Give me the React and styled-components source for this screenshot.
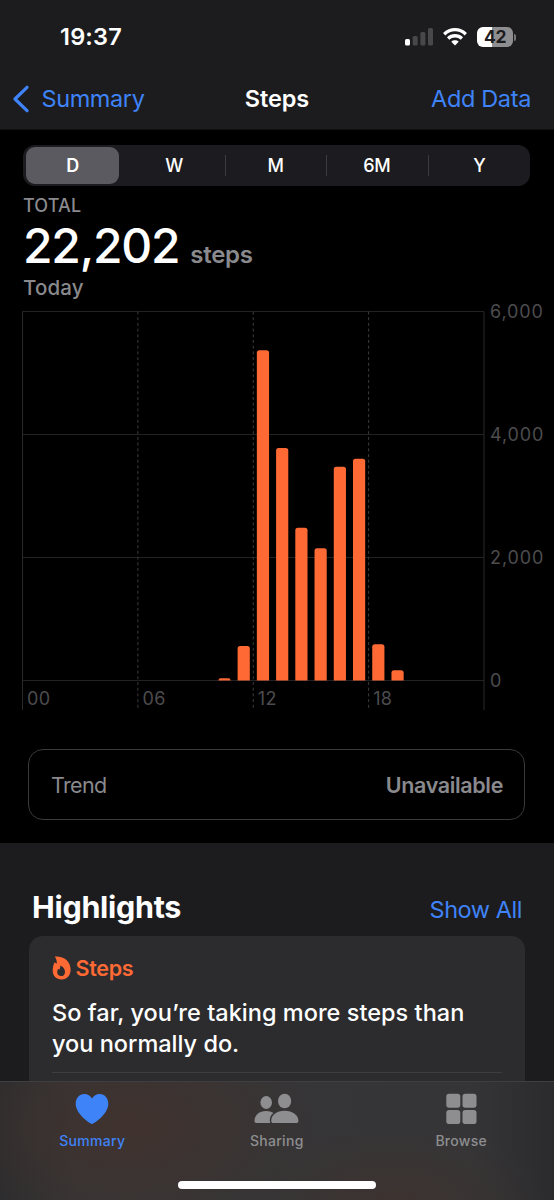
import React from 'react'
import styled, { createGlobalStyle } from 'styled-components'

const GlobalStyle = createGlobalStyle`
  * {
    box-sizing: border-box;
  }
  body {
    margin: 0;
    background: #000;
    font-family: Inter, "Liberation Sans", sans-serif;
    -webkit-font-smoothing: antialiased;
  }
`

const Screen = styled.div`
  display: flex;
  flex-direction: column;
  width: 554px;
  height: 1200px;
  overflow: hidden;
  background: #000;
  color: #fff;
`

const Text = styled.span`
  font-size: ${p => p.size}px;
  font-weight: ${p => p.weight || 400};
  letter-spacing: ${p => p.spacing || 0}px;
  line-height: ${p => p.line || 30}px;
  color: ${p => p.color || '#fff'};
  white-space: nowrap;
`

const Header = styled.header`
  height: 130px;
  flex: none;
  background: #1c1c1e;
  border-bottom: 1px solid #111113;
`

const StatusBar = styled.div`
  display: flex;
  justify-content: space-between;
  height: 74px;
  padding: 22px 38px 0 60px;
`

const StatusIcons = styled.div`
  display: flex;
  gap: 10px;
  padding-top: 5px;
`

const Battery = styled.div`
  display: flex;
  align-items: center;
  height: 20px;
`

const BatteryBody = styled.div`
  display: flex;
  justify-content: center;
  width: 36px;
  height: 20px;
  border-radius: 6px;
  background: linear-gradient(to right, #fff 43%, #8e8e90 43%);
`

const BatteryCap = styled.div`
  width: 2px;
  height: 7px;
  margin-left: 1px;
  border-radius: 0 2px 2px 0;
  background: #77777a;
`

const NavBar = styled.nav`
  display: grid;
  grid-template-columns: 1fr auto 1fr;
  align-items: center;
  height: 50px;
`

const Back = styled.div`
  display: flex;
  align-items: center;
  gap: 11.5px;
  padding-left: 13px;
`

const End = styled.div`
  display: flex;
  justify-content: flex-end;
  padding-right: 23px;
`

const Body = styled.main`
  flex: 1;
  min-height: 0;
  overflow: hidden;
`

const Segments = styled.div`
  display: grid;
  grid-template-columns: repeat(5, 1fr);
  width: 507px;
  height: 41px;
  margin: 15px 0 0 23px;
  padding: 2px 0;
  border-radius: 12px;
  background: #1c1c20;
`

const Segment = styled.div`
  display: flex;
  align-items: center;
  justify-content: center;
  position: relative;
  margin: ${p => (p.$active ? '0 5px 0 3px' : '0')};
  padding-right: ${p => (p.$divider ? 2 : 0)}px;
  border-radius: 9px;
  background: ${p => (p.$active ? '#5b5a60' : 'transparent')};

  &::after {
    content: '';
    display: ${p => (p.$divider ? 'block' : 'none')};
    position: absolute;
    right: 0;
    top: 8px;
    width: 1px;
    height: 21px;
    background: #3c3c40;
  }
`

const Stats = styled.div`
  display: flex;
  flex-direction: column;
  height: 118px;
  padding: 7px 0 0 23px;
`

const Total = styled.div`
  display: flex;
  align-items: baseline;
  gap: 11px;
  height: 54px;
  margin: 1px 0 0;
`

const Chart = styled.svg`
  display: block;
  overflow: visible;
  font-size: 18px;
  fill: #4c4c4e;
`

const Trend = styled.div`
  display: flex;
  align-items: center;
  justify-content: space-between;
  width: 497px;
  height: 71px;
  margin: 35px 0 23px 28px;
  padding: 0 21px 0 22px;
  border: 1.5px solid #3a3a3c;
  border-radius: 15px;
`

const Highlights = styled.section`
  height: 260px;
  padding: 46px 29px 0;
  background: #1c1c1e;
`

const SectionTitle = styled.div`
  display: flex;
  align-items: baseline;
  justify-content: space-between;
  height: 47px;
  padding: 0 3px;
`

const Card = styled.div`
  height: 200px;
  padding: 16px 23px;
  border-radius: 14px;
  background: #2c2c2e;
`

const CardTitle = styled.div`
  display: flex;
  align-items: center;
  gap: 4.5px;
  height: 31px;
`

const Message = styled.div`
  display: flex;
  flex-direction: column;
  height: 90px;
  padding-top: 14px;
  border-bottom: 1px solid #3e3e40;
`

const TabBar = styled.footer`
  display: flex;
  flex-direction: column;
  align-items: center;
  flex: none;
  height: 119px;
  border-top: 1px solid #3f3e40;
  background:
    radial-gradient(ellipse 190px 110px at 130px 45px, #40322e 0%, rgba(64, 50, 46, 0) 100%),
    radial-gradient(ellipse 150px 75px at 395px 119px, #3d3330 0%, rgba(61, 51, 48, 0) 100%),
    linear-gradient(to right, #2c2c2e 0, #363536 80px, #353537 470px, #2b2b2d 554px);
`

const Tabs = styled.div`
  display: grid;
  grid-template-columns: repeat(3, 184.5px);
  width: 554px;
  height: 99px;
`

const Tab = styled.div`
  display: flex;
  flex-direction: column;
  align-items: center;
  padding-top: 11px;
`

const HomeIndicator = styled.div`
  width: 198px;
  height: 8px;
  border-radius: 4px;
  background: #fff;
`

const blue = '#3f83f8'
const gray = '#8a8a8e'
const orange = '#ff6934'

const ranges = ['D', 'W', 'M', '6M', 'Y']

// hour of the day, steps taken
const steps = [
  [10, 35],
  [11, 560],
  [12, 5370],
  [13, 3780],
  [14, 2485],
  [15, 2150],
  [16, 3475],
  [17, 3605],
  [18, 590],
  [19, 165],
]

const LEFT = 22.5
const RIGHT = 484
const TOP = 7.5
const BASE = 376.5
const hourX = h => LEFT + (h * (RIGHT - LEFT)) / 24
const stepY = v => BASE - (v * (BASE - TOP)) / 6000

const barPath = ([hour, value]) => {
  const x = hourX(hour) + 3.6
  const y = stepY(value)
  const r = Math.min(2.5, BASE - y)
  return `M${x} ${BASE}V${y + r}q0 ${-r} ${r} ${-r}h${12.2 - 2 * r}q${r} 0 ${r} ${r}V${BASE}z`
}

const StepsChart = () => (
  <Chart width="554" height="410" viewBox="0 0 554 410">
    <g stroke="#222224" strokeWidth="1">
      {[0, 2000, 4000, 6000].map(v => (
        <line key={v} x1={LEFT} x2={RIGHT} y1={stepY(v)} y2={stepY(v)} />
      ))}
      <line x1={LEFT} x2={LEFT} y1={TOP} y2="406" stroke="#2a2a2c" />
      <line x1={RIGHT} x2={RIGHT} y1={TOP} y2="406" stroke="#2a2a2c" />
      {[6, 12, 18].map(h => (
        <line key={h} x1={hourX(h)} x2={hourX(h)} y1={TOP} y2="406" stroke="#3c3c3e" strokeDasharray="3 2.7" />
      ))}
    </g>
    {steps.map(s => (
      <path key={s[0]} d={barPath(s)} fill={orange} />
    ))}
    {[0, 2000, 4000, 6000].map(v => (
      <text key={v} x="490" y={stepY(v) + 6.5} letterSpacing="0.9">{v.toLocaleString('en-US')}</text>
    ))}
    {[0, 6, 12, 18].map(h => (
      <text key={h} x={hourX(h) + 4.5} y="401" letterSpacing="0.4">{String(h).padStart(2, '0')}</text>
    ))}
  </Chart>
)

const SignalIcon = () => (
  <svg width="28" height="20" viewBox="0 0 28 20">
    <rect x="0" y="12" width="5" height="6.5" rx="1.5" fill="#fff" />
    <rect x="7.7" y="9" width="5" height="9.5" rx="1.5" fill="#48484a" />
    <rect x="15.4" y="5" width="5" height="13.5" rx="1.5" fill="#48484a" />
    <rect x="23" y="1" width="5" height="17.5" rx="1.5" fill="#48484a" />
  </svg>
)

const WifiIcon = () => (
  <svg width="24" height="20" viewBox="0 0 24 20" fill="none" stroke="#fff" strokeWidth="3.3">
    <path d="M1.2 7.2C7.4 1.1 16.6 1.1 22.8 7.2" />
    <path d="M5.1 11.5C9 7.8 15 7.8 18.9 11.5" />
    <path d="M8.3 14.7C10.4 12.8 13.6 12.8 15.7 14.7L12 18.4z" fill="#fff" stroke="none" />
  </svg>
)

const BackIcon = () => (
  <svg width="17" height="28" viewBox="0 0 17 28" fill="none" stroke={blue} strokeWidth="3.2" strokeLinecap="round" strokeLinejoin="round">
    <path d="M14 2.3L2 14L14 25.7" />
  </svg>
)

const FlameIcon = () => (
  <svg width="19" height="24" viewBox="0 0 19 24" fill={orange} fillRule="evenodd">
    <path d="M2.8.6C11.5-.2 18.6 5 18.6 13.5C18.6 19.6 15 23.4 9.6 23.4C4.3 23.4.7 19.8.7 14.8C.7 11.4 1.4 8.6 2.4 6.4C3.4 6.6 4.2 7.1 4.8 7.7C5 5.1 4.2 2.6 2.8.6ZM8.2 9.6C8.5 11.2 8 12.6 7.2 13.7C6.8 13.3 6.5 13.1 6.1 13C5.5 14 5.2 15 5.2 16C5.2 18.5 6.9 20.1 9.2 20.1C11.5 20.1 13 18.4 13 15.9C13 12.9 11 10.6 8.2 9.6Z" />
  </svg>
)

const HeartIcon = () => (
  <svg width="34" height="32" viewBox="0 0 34 32" fill={blue}>
    <path d="M17 31C15.8 31 .7 21.4 .7 10.7C.7 5 4.4 1 9.3 1C12.7 1 15.4 2.8 17 5.6C18.6 2.8 21.3 1 24.7 1C29.6 1 33.3 5 33.3 10.7C33.3 21.4 18.2 31 17 31Z" />
  </svg>
)

const PeopleIcon = () => (
  <svg width="45" height="32" viewBox="0 0 45 32" fill="#8e8e90">
    <ellipse cx="12.2" cy="9.5" rx="5.8" ry="6.4" />
    <path d="M.5 28C.5 22 5.3 17.9 12.2 17.9C15.2 17.9 17.6 18.7 19.4 20C17 22 15.8 24.6 15.8 27.2C15.8 28.6 16 29.2 16.4 30H2.4C1.1 30 .5 29.3 .5 28Z" />
    <ellipse cx="30.6" cy="8" rx="6.6" ry="7.3" />
    <path d="M17.2 27.7C17.2 22.2 22.5 17.7 30.6 17.7C38.7 17.7 44.4 22.2 44.4 27.7C44.4 29.2 43.6 30 42 30H19.6C18 30 17.2 29.2 17.2 27.7Z" />
  </svg>
)

const GridIcon = () => (
  <svg width="31" height="32" viewBox="0 0 31 32" fill="#8e8e90">
    <rect x=".3" y=".8" width="14" height="14" rx="2.8" />
    <rect x="16.5" y=".8" width="14" height="14" rx="2.8" />
    <rect x=".3" y="17" width="14" height="14" rx="2.8" />
    <rect x="16.5" y="17" width="14" height="14" rx="2.8" />
  </svg>
)

const App = () => (
  <Screen>
    <GlobalStyle />
    <Header>
      <StatusBar>
        <Text size={23.5} weight={600} spacing={0.2}>19:37</Text>
        <StatusIcons>
          <SignalIcon />
          <WifiIcon />
          <Battery>
            <BatteryBody>
              <Text size={17.5} weight={700} spacing={-0.5} line={20} color="#1c1c1e">42</Text>
            </BatteryBody>
            <BatteryCap />
          </Battery>
        </StatusIcons>
      </StatusBar>
      <NavBar>
        <Back>
          <BackIcon />
          <Text size={23.5} spacing={-0.4} color={blue}>Summary</Text>
        </Back>
        <Text size={23.5} weight={600} spacing={-0.1}>Steps</Text>
        <End>
          <Text size={23.5} spacing={-0.35} color={blue}>Add Data</Text>
        </End>
      </NavBar>
    </Header>
    <Body>
      <Segments>
        {ranges.map((r, i) => (
          <Segment key={r} $active={i === 0} $divider={i > 0 && i < 4}>
            <Text size={18} weight={i === 0 ? 600 : 500} spacing={-0.2}>{r}</Text>
          </Segment>
        ))}
      </Segments>
      <Stats>
        <Text size={18} weight={500} spacing={0.15} line={25} color={gray}>TOTAL</Text>
        <Total>
          <Text size={48} weight={500} spacing={-1.25} line={54}>22,202</Text>
          <Text size={24} weight={600} spacing={-0.3} color={gray}>steps</Text>
        </Total>
        <Text size={20.5} weight={500} spacing={0.15} line={30} color={gray}>Today</Text>
      </Stats>
      <StepsChart />
      <Trend>
        <Text size={21.5} spacing={-0.65} color={gray}>Trend</Text>
        <Text size={21.5} weight={600} spacing={-0.35} color={gray}>Unavailable</Text>
      </Trend>
      <Highlights>
        <SectionTitle>
          <Text size={30.5} weight={700} spacing={-0.3} line={36}>Highlights</Text>
          <Text size={23.5} spacing={-0.45} color={blue}>Show All</Text>
        </SectionTitle>
        <Card>
          <CardTitle>
            <FlameIcon />
            <Text size={21.5} weight={600} spacing={-0.3} color={orange}>Steps</Text>
          </CardTitle>
          <Message>
            <Text size={23.5} weight={500} spacing={0.03} line={31}>So far, you’re taking more steps than</Text>
            <Text size={23.5} weight={500} line={31}>you normally do.</Text>
          </Message>
        </Card>
      </Highlights>
    </Body>
    <TabBar>
      <Tabs>
        <Tab>
          <HeartIcon />
          <Text size={14} weight={500} spacing={0.3} line={32} color={blue}>Summary</Text>
        </Tab>
        <Tab>
          <PeopleIcon />
          <Text size={14} weight={500} spacing={0.3} line={32} color="#8e8e90">Sharing</Text>
        </Tab>
        <Tab>
          <GridIcon />
          <Text size={14} weight={500} spacing={0.3} line={32} color="#8e8e90">Browse</Text>
        </Tab>
      </Tabs>
      <HomeIndicator />
    </TabBar>
  </Screen>
)

export default App
